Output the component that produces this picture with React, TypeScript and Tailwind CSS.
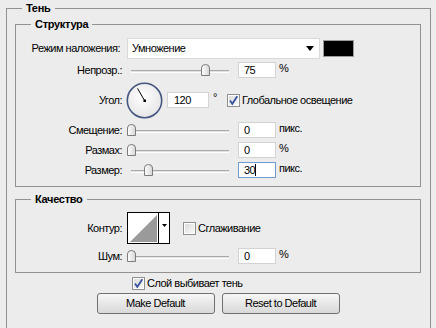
import React from 'react';

function Thumb({ left }: { left: number }) {
  return (
    <svg width="9" height="12" viewBox="0 0 9 12" className="absolute top-[2px]" style={{ left }}>
      <defs>
        <linearGradient id="thumbFill" x1="0" y1="0" x2="1" y2="0">
          <stop offset="0" stopColor="#ffffff" />
          <stop offset="1" stopColor="#d6d6d6" />
        </linearGradient>
      </defs>
      <path d="M0.5 11.5 V4 Q0.5 0.5 4.5 0.5 Q8.5 0.5 8.5 4 V11.5 Z" fill="url(#thumbFill)" stroke="#7b7b7b" />
    </svg>
  );
}

// slider box spans x 127..233, track 131..229
function Slider({ thumb }: { thumb: number }) {
  return (
    <div className="relative w-[106px] h-[16px] shrink-0">
      <div className="absolute left-[4px] top-[8px] w-[98px] h-[3px] border-t border-[#a9a9a9] bg-[#e2e2e2] border-b border-b-white" />
      <Thumb left={thumb} />
    </div>
  );
}

function Field({ value, focused = false }: { value: string; focused?: boolean }) {
  return (
    <div
      className={`ml-[5px] w-[38px] h-[16px] shrink-0 bg-white border flex items-center pl-[5px] text-[11px] leading-none ${
        focused ? 'border-[#6f9bd1]' : 'border-[#d3d3d3]'
      }`}
    >
      {value}
      {focused && <span className="w-px h-[12px] bg-black" />}
    </div>
  );
}

function CheckBox({ checked }: { checked: boolean }) {
  return (
    <svg width="13" height="13" viewBox="0 0 13 13" className="shrink-0">
      <defs>
        <linearGradient id="cbFill" x1="0" y1="0" x2="1" y2="1">
          <stop offset="0" stopColor="#dcdcdc" />
          <stop offset="1" stopColor="#f7f7f7" />
        </linearGradient>
      </defs>
      <rect x="0.5" y="0.5" width="12" height="12" fill="#ffffff" stroke="#8e8f8f" />
      <rect x="2" y="2" width="9" height="9" fill="url(#cbFill)" />
      {checked && (
        <path d="M3 6.5 L5.3 9.8 L10.3 2.2" fill="none" stroke="#3a55a0" strokeWidth="1.8" />
      )}
    </svg>
  );
}

function Label({ children }: { children: React.ReactNode }) {
  return <div className="w-[107px] shrink-0 text-right pr-[1px]">{children}</div>;
}

function Row({ className, children }: { className: string; children: React.ReactNode }) {
  return <div className={`flex items-center ${className}`}>{children}</div>;
}

function SliderRow({ label, thumb, value, unit, focused, className }: {
  label: string; thumb: number; value: string; unit: string; focused?: boolean; className: string;
}) {
  return (
    <Row className={`h-[16px] ${className}`}>
      <Label>{label}</Label>
      <div className="ml-[4px]" />
      <Slider thumb={thumb} />
      <Field value={value} focused={focused} />
      <span className="ml-[3px] -mt-[3px]">{unit}</span>
    </Row>
  );
}

function Dial() {
  return (
    <svg width="37" height="37" viewBox="0 0 37 37" className="shrink-0">
      <defs>
        <radialGradient id="dialFill" cx="0.45" cy="0.4" r="0.6">
          <stop offset="0" stopColor="#ffffff" />
          <stop offset="1" stopColor="#e6e6e6" />
        </radialGradient>
      </defs>
      <circle cx="18.5" cy="18.5" r="17.2" fill="url(#dialFill)" stroke="#44557f" strokeWidth="1.6" />
      <line x1="18.5" y1="18.5" x2="11.5" y2="6.4" stroke="#000" strokeWidth="1" />
      <rect x="17.5" y="17.5" width="2.5" height="2.5" fill="#000" />
    </svg>
  );
}

function Contour() {
  return (
    <div className="ml-[4px] w-[43px] h-[32px] border border-black bg-white flex shrink-0">
      <svg width="30" height="30" viewBox="0 0 30 30" className="shrink-0">
        <polygon points="2,29 29,2 29,29" fill="#9a9a9a" />
      </svg>
      <div className="w-[11px] border-l border-black flex justify-center pt-[11px]">
        <svg width="5" height="3" viewBox="0 0 5 3">
          <polygon points="0,0 5,0 2.5,3" fill="#000" />
        </svg>
      </div>
    </div>
  );
}

function Button({ children }: { children: React.ReactNode }) {
  return (
    <div className="w-[118px] h-[21px] rounded-[3px] border border-[#707070] bg-gradient-to-b from-[#f6f6f6] to-[#d9d9d9] flex items-center justify-center">
      {children}
    </div>
  );
}

export default function App() {
  return (
    <div className="h-[328px] w-[436px] overflow-hidden bg-[#ececec] text-black text-[11px] tracking-[-0.5px] font-['Liberation_Sans',Arial,sans-serif] pt-[1px]">
      <fieldset className="ml-[6px] w-[425px] border border-[#929292] pb-[40px]">
        <legend className="ml-[15px] px-[4px] font-bold leading-[15px] tracking-[-0.3px]">Тень</legend>

        {/* Структура */}
        <fieldset className="mt-[1px] ml-[8px] w-[406px] border border-[#929292] pb-[8px]">
          <legend className="ml-[15px] px-[4px] font-bold leading-[15px] tracking-[-0.3px]">Структура</legend>

          <Row className="mt-[6px] h-[21px]">
            <div className="w-[104px] shrink-0 text-right">Режим наложения:</div>
            <div className="ml-[7px] w-[193px] h-[21px] bg-white border border-[#dadada] flex items-center justify-between pl-[4px] pr-[5px]">
              <span>Умножение</span>
              <svg width="8" height="5" viewBox="0 0 8 5">
                <polygon points="0,0 8,0 4,5" fill="#000" />
              </svg>
            </div>
            <div className="ml-[3px] w-[31px] h-[17px] bg-black border border-[#9b9b9b]" />
          </Row>

          <SliderRow className="mt-[3px]" label="Непрозр.:" thumb={74} value="75" unit="%" />

          <Row className="mt-[4px] h-[36px]">
            <Label>Угол:</Label>
            <div className="ml-[3px]" />
            <Dial />
            <div className="ml-[4px] w-[42px] h-[16px] bg-white border border-[#d3d3d3] flex items-center pl-[6px]">120</div>
            <span className="ml-[4px] -mt-[6px]">°</span>
            <div className="ml-[10px] flex items-center gap-[2px]">
              <CheckBox checked />
              <span>Глобальное освещение</span>
            </div>
          </Row>

          <SliderRow className="mt-[4px]" label="Смещение:" thumb={0} value="0" unit="пикс." />
          <SliderRow className="mt-[4px]" label="Размах:" thumb={0} value="0" unit="%" />
          <SliderRow className="mt-[4px]" label="Размер:" thumb={17} value="30" unit="пикс." focused />
        </fieldset>

        {/* Качество */}
        <fieldset className="mt-[5px] ml-[8px] w-[406px] border border-[#929292] pb-[8px]">
          <legend className="ml-[15px] px-[4px] font-bold leading-[15px] tracking-[-0.3px]">Качество</legend>

          <Row className="mt-[5px] h-[32px]">
            <Label>Контур:</Label>
            <Contour />
            <div className="ml-[13px] flex items-center gap-[2px]">
              <CheckBox checked={false} />
              <span>Сглаживание</span>
            </div>
          </Row>

          <SliderRow className="mt-[4px]" label="Шум:" thumb={0} value="0" unit="%" />
        </fieldset>

        <div className="mt-[4px] ml-[125px] h-[13px] flex items-center gap-[2px]">
          <CheckBox checked />
          <span>Слой выбивает тень</span>
        </div>

        <div className="mt-[3px] flex justify-center gap-[7px] pr-[1px]">
          <Button>Make Default</Button>
          <Button>Reset to Default</Button>
        </div>
      </fieldset>
    </div>
  );
}
